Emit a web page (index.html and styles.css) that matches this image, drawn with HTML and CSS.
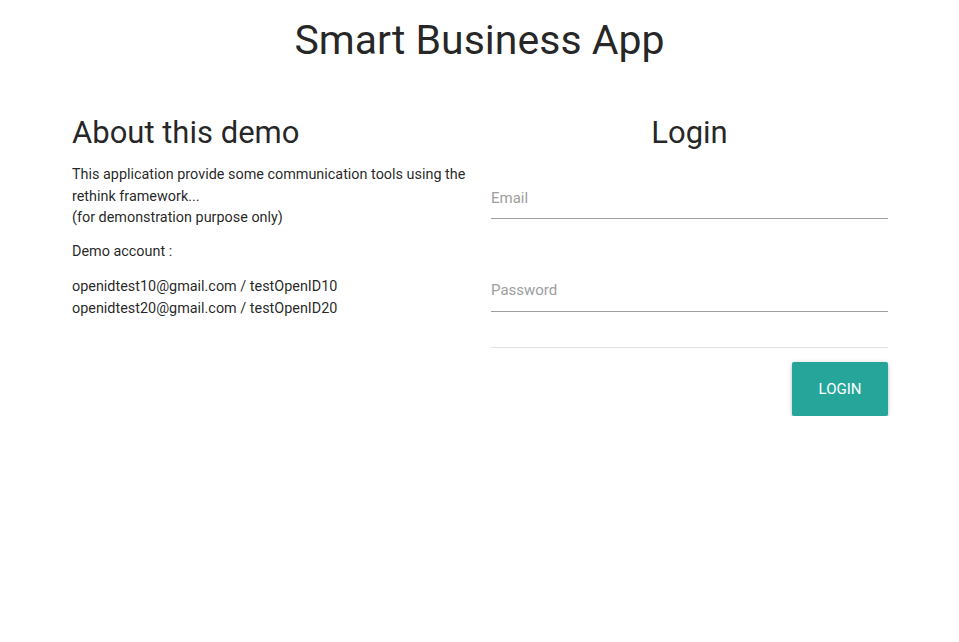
FILE: index.html
```html
<!DOCTYPE html>
<html lang="en">
<head>
<meta charset="utf-8">
<title>Smart Business App</title>
<link rel="stylesheet" href="styles.css">
</head>
<body>
<h1 class="app-title">Smart Business App</h1>
<main class="container">
  <section class="about">
    <h2 class="section-title">About this demo</h2>
    <p class="text intro">This application provide some communication tools using the rethink framework...<br>(for demonstration purpose only)</p>
    <p class="text demo">Demo account :</p>
    <p class="text accounts">openidtest10@gmail.com / testOpenID10<br>openidtest20@gmail.com / testOpenID20</p>
  </section>
  <section class="login">
    <h2 class="section-title centered">Login</h2>
    <form class="login-form">
      <input class="field" type="email" placeholder="Email">
      <input class="field field-password" type="password" placeholder="Password">
      <div class="divider"></div>
      <div class="actions">
        <button class="btn" type="button">Login</button>
      </div>
    </form>
  </section>
</main>
</body>
</html>
```
FILE: styles.css
```css
* { box-sizing: border-box; }
html, body { margin: 0; padding: 0; background: #fff; }
body {
  font-family: Roboto, "Liberation Sans", sans-serif;
  color: rgba(0,0,0,0.87);
}
.app-title {
  margin: 16px 0 0;
  font-size: 41px;
  line-height: 48px;
  font-weight: 400;
  text-align: center;
}
.container {
  width: 816px;
  margin: 51px 71px 0 72px;
  display: grid;
  grid-template-columns: 397px 397px;
  column-gap: 22px;
}
.section-title {
  margin: 0;
  font-size: 31px;
  line-height: 36px;
  font-weight: 400;
}
.centered { text-align: center; }
.text {
  margin: 0;
  font-size: 14.4px;
  line-height: 21.5px;
}
.intro { margin-top: 13px; }
.demo { margin-top: 12px; }
.accounts { margin-top: 14px; }
.login-form {
  display: flex;
  flex-direction: column;
  margin-top: 21px;
}
.field {
  display: block;
  width: 100%;
  height: 47px;
  padding: 6px 0 0;
  border: 0;
  border-bottom: 1px solid #9e9e9e;
  background: transparent;
  font-family: Roboto, "Liberation Sans", sans-serif;
  font-size: 15px;
  color: rgba(0,0,0,0.87);
  outline: none;
}
.field::placeholder { color: #9e9e9e; }
.field-password { margin-top: 46px; padding-top: 4px; }
.divider {
  margin-top: 35px;
  height: 1px;
  background: #e0e0e0;
}
.actions {
  display: flex;
  justify-content: flex-end;
  margin-top: 14px;
}
.btn {
  width: 96px;
  height: 54px;
  border: 0;
  border-radius: 2px;
  background: #26a69a;
  color: #fff;
  font-family: Roboto, "Liberation Sans", sans-serif;
  font-size: 15px;
  font-weight: 400;
  text-transform: uppercase;
  box-shadow: 0 2px 2px 0 rgba(0,0,0,0.14), 0 3px 1px -2px rgba(0,0,0,0.12), 0 1px 5px 0 rgba(0,0,0,0.2);
  cursor: pointer;
}
```
